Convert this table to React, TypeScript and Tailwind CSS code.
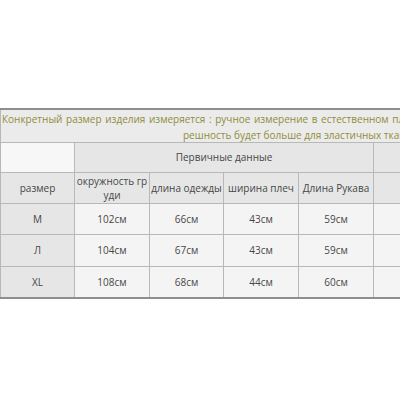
const rows = [
  { size: "M", chest: "102см", length: "66см", shoulder: "43см", sleeve: "59см" },
  { size: "Л", chest: "104см", length: "67см", shoulder: "43см", sleeve: "59см" },
  { size: "XL", chest: "108см", length: "68см", shoulder: "44см", sleeve: "60см" },
];

const head = "bg-[#e6e6e6] flex items-center justify-center text-center";
const cell = "bg-[#f4f4f4] flex items-center justify-center text-center";

export default function App() {
  return (
    <div
      className="w-[400px] h-[400px] overflow-hidden bg-white pt-[108px] text-[#474747] text-[10px]"
      style={{ fontFamily: '"Open Sans", "DejaVu Sans", sans-serif' }}
    >
      <div className="w-[460px] border-t-2 border-b-2 border-[#8e8e8e]">
        <div className="bg-[#ebebeb] border-l border-[#b8b8b8] h-[32px] text-[#8e8e3a] text-[10px] leading-[16px] pt-[1px] whitespace-nowrap">
          <div className="pl-[1px] [word-spacing:1px]">
            Конкретный размер изделия измеряется : ручное измерение в естественном плоском состоянии, пог
          </div>
          <div className="pl-[182px]">решность будет больше для эластичных тканей.</div>
        </div>
        <div className="grid grid-cols-[73px_74px_73px_74px_74px_74px] grid-rows-[29px_30px_30px_31px_30px] gap-px bg-[#b8b8b8] pl-px pt-px">
          <div className="bg-[#f7f7f7]" />
          <div className={`${head} col-span-4`}>Первичные данные</div>
          <div className={head} />

          <div className={head}>размер</div>
          <div className={`${head} leading-[14px]`}>
            окружность гр
            <br />
            уди
          </div>
          <div className={head}>длина одежды</div>
          <div className={head}>ширина плеч</div>
          <div className={head}>Длина Рукава</div>
          <div className={head} />

          {rows.map((r) => (
            <div key={r.size} className="contents">
              <div className={head}>{r.size}</div>
              <div className={cell}>{r.chest}</div>
              <div className={cell}>{r.length}</div>
              <div className={cell}>{r.shoulder}</div>
              <div className={cell}>{r.sleeve}</div>
              <div className={cell} />
            </div>
          ))}
        </div>
      </div>
    </div>
  );
}
